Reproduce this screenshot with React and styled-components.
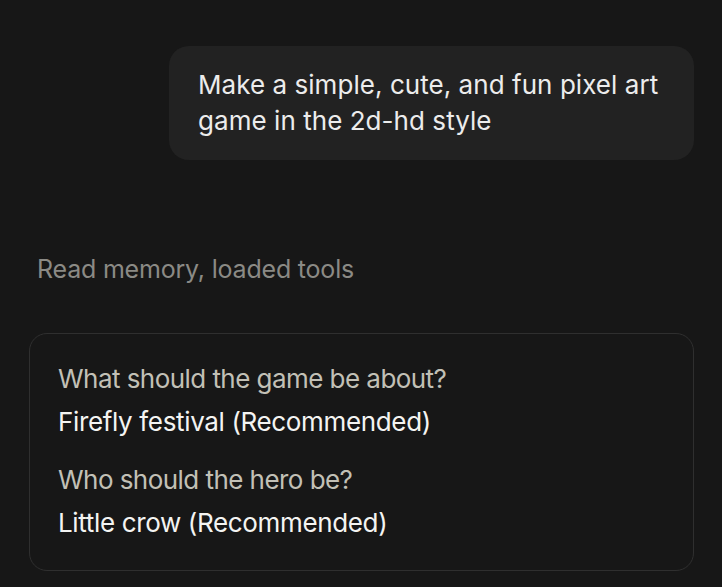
import React from 'react';
import styled, { createGlobalStyle } from 'styled-components';

const GlobalStyle = createGlobalStyle`
    html, body {
        margin: 0;
        padding: 0;
        background-color: #171717;
    }
    body {
        font-family: Inter, "Noto Sans", sans-serif;
        -webkit-font-smoothing: antialiased;
    }
`;

const Thread = styled.main`
    width: 722px;
    min-height: 587px;
    box-sizing: border-box;
    padding: 46px 28px 0 29px;
    display: flex;
    flex-direction: column;
`;

const UserBubble = styled.div`
    align-self: flex-end;
    width: 525px;
    box-sizing: border-box;
    padding: 21px 29px;
    background-color: #222222;
    border-radius: 20px;
    color: #ececec;
    font-size: 26px;
    line-height: 36px;
    letter-spacing: 0.05px;
`;

const Status = styled.p`
    margin: 91px 0 0 8px;
    color: #8b8a85;
    font-size: 25px;
    line-height: 36px;
    letter-spacing: -0.2px;
`;

const AnswerCard = styled.section`
    margin-top: 46px;
    box-sizing: border-box;
    width: 665px;
    border: 1px solid #2f2f2f;
    border-radius: 18px;
    padding: 28px 28px 30px;
    display: flex;
    flex-direction: column;
    gap: 24px;
`;

const QA = styled.div`
    display: flex;
    flex-direction: column;
    gap: 9px;
`;

const Question = styled.div`
    color: #c2c0b6;
    font-size: 26px;
    line-height: 34px;
    letter-spacing: -0.55px;
`;

const Answer = styled.div`
    color: #f4f4f2;
    font-size: 26px;
    line-height: 34px;
    letter-spacing: -0.35px;
`;

const answers = [
    { q: 'What should the game be about?', a: 'Firefly festival (Recommended)' },
    { q: 'Who should the hero be?', a: 'Little crow (Recommended)' },
];

function App() {
    return (
        <>
            <GlobalStyle />
            <Thread>
                <UserBubble>
                    Make a simple, cute, and fun pixel art game in the 2d-hd style
                </UserBubble>
                <Status>Read memory, loaded tools</Status>
                <AnswerCard>
                    {answers.map((item) => (
                        <QA key={item.q}>
                            <Question>{item.q}</Question>
                            <Answer>{item.a}</Answer>
                        </QA>
                    ))}
                </AnswerCard>
            </Thread>
        </>
    );
}

export default App;
